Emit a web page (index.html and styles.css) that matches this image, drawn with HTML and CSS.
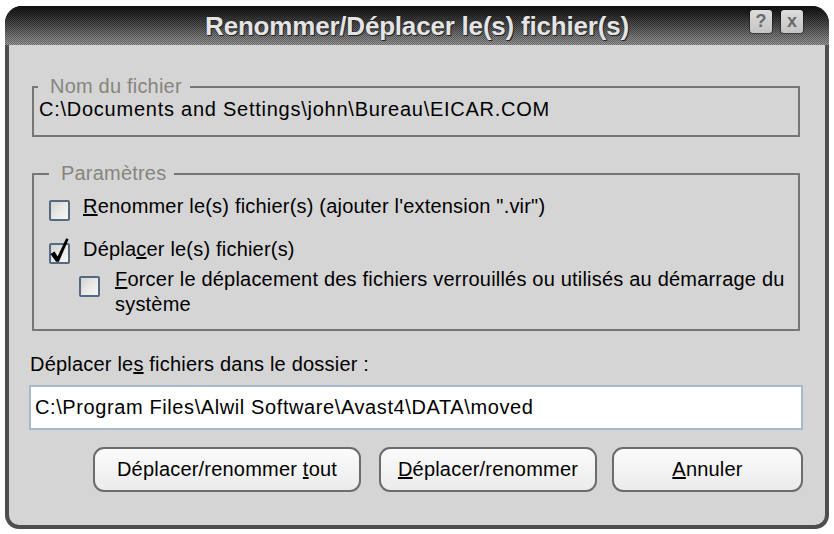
FILE: index.html
```html
<!DOCTYPE html>
<html lang="fr">
<head>
<meta charset="utf-8">
<title>Renommer/Déplacer le(s) fichier(s)</title>
<link rel="stylesheet" href="styles.css">
</head>
<body>
<div class="window">
  <div class="titlebar">
    <span class="tb-spacer"></span>
    <div class="title">Renommer/Déplacer le(s) fichier(s)</div>
    <div class="tb-buttons">
      <span class="tb-btn">?</span>
      <span class="tb-btn">x</span>
    </div>
  </div>
  <div class="content">
    <fieldset class="group group-name">
      <legend>Nom du fichier</legend>
      <div class="path">C:\Documents and Settings\john\Bureau\EICAR.COM</div>
    </fieldset>
    <fieldset class="group group-params">
      <legend>Paramètres</legend>
      <div class="check row1">
        <span class="box"></span>
        <span class="lbl"><u>R</u>enommer le(s) fichier(s) (ajouter l'extension ".vir")</span>
      </div>
      <div class="check row2">
        <span class="box checked"><svg class="tick" viewBox="0 0 21 21" width="21" height="21"><polygon points="1.5,11 5.5,8.6 8.6,13.4 17.2,-4.8 19.6,-3.8 9.9,18.8 7.1,18.8"/></svg></span>
        <span class="lbl">Dépla<u>c</u>er le(s) fichier(s)</span>
      </div>
      <div class="check row3">
        <span class="box"></span>
        <span class="lbl"><u>F</u>orcer le déplacement des fichiers verrouillés ou utilisés au démarrage du système</span>
      </div>
    </fieldset>
    <div class="dest-label">Déplacer le<u>s</u> fichiers dans le dossier :</div>
    <div class="input">C:\Program Files\Alwil Software\Avast4\DATA\moved</div>
    <div class="buttons">
      <div class="btn btn-all">Déplacer/renommer <u>t</u>out</div>
      <div class="btn btn-one"><u>D</u>éplacer/renommer</div>
      <div class="btn btn-cancel"><u>A</u>nnuler</div>
    </div>
  </div>
</div>
</body>
</html>
```

FILE: styles.css
```css
html, body {
  margin: 0;
  padding: 0;
  background: #ffffff;
}

body {
  font-family: "Liberation Sans", Arial, sans-serif;
  font-size: 20px;
  letter-spacing: 0.2px;
  color: #000;
}

.window {
  margin: 6px 0 0 5px;
  width: 824px;
  height: 523px;
  background: #4e4e4e;
  border-radius: 17px 17px 14px 14px;
  display: flex;
  flex-direction: column;
  overflow: hidden;
}

.titlebar {
  height: 39px;
  flex: none;
  display: grid;
  grid-template-columns: 1fr auto 1fr;
  align-items: center;
  background:
    repeating-conic-gradient(rgba(0,0,0,0.28) 0 25%, rgba(255,255,255,0.06) 0 50%) 0 0 / 2px 2px,
    linear-gradient(#0a0a0a 0%, #1e1e1e 20%, #4c4c4c 52%, #808080 85%, #949494 100%);
}

.title {
  font-weight: bold;
  font-size: 26px;
  letter-spacing: -0.2px;
  color: #e4e4e4;
  text-shadow: 0 0 2px #1a1a1a, 1px 1px 0 #2a2a2a;
  line-height: 39px;
  padding-top: 1px;
  white-space: nowrap;
}

.tb-buttons {
  justify-self: end;
  display: flex;
  gap: 9px;
  padding-right: 26px;
  align-self: start;
  padding-top: 4px;
}

.tb-btn {
  width: 22px;
  height: 23px;
  background: linear-gradient(#dcdcdc, #c4c4c4);
  border-radius: 3px;
  box-shadow: 0 0 0 1px rgba(0,0,0,0.35);
  color: #6a6a6a;
  font-weight: bold;
  font-size: 18px;
  line-height: 23px;
  text-align: center;
  letter-spacing: 0;
}

.content {
  flex: 1;
  margin: 0 4px 4px 4px;
  background: #d5d5d5;
  border-radius: 0 0 10px 10px;
  display: flex;
  flex-direction: column;
  padding-top: 30px;
}

.group {
  margin: 0 25px 0 23px;
  padding: 0 4px 0 15px;
  border: 2px solid #767676;
  min-width: 0;
}

.group legend {
  margin-left: 0;
  padding: 0 8px 0 12px;
  line-height: 23px;
  color: #85857d;
}

.group-name {
  padding-left: 4px;
  padding-bottom: 14px;
}

.path {
  line-height: 23px;
  letter-spacing: 0.75px;
  white-space: nowrap;
  padding-left: 1px;
}

.group-params {
  margin-top: 25px;
  padding-top: 9px;
  padding-bottom: 12px;
}

.check {
  display: flex;
  align-items: flex-start;
  gap: 13px;
  line-height: 25px;
}

.row2 {
  margin-top: 16px;
}

.row3 {
  margin-top: 3px;
  margin-left: 30px;
  gap: 15px;
}

.box {
  flex: none;
  width: 17px;
  height: 17px;
  margin-top: 6px;
  border: 2px solid #556a82;
  border-radius: 2px;
  background: linear-gradient(135deg, #d2d2ce 0%, #e8e8e6 50%, #f7f7f7 100%);
  position: relative;
}

.row3 .box {
  margin-top: 9px;
}

.tick {
  position: absolute;
  left: -2px;
  top: -2px;
  overflow: visible;
}

.tick polygon {
  fill: #000;
}

.dest-label {
  margin: 21px 0 0 21px;
  line-height: 25px;
}

.input {
  margin: 8px 22px 0 20px;
  height: 41px;
  border: 2px solid #a7b9cc;
  background: #fff;
  padding-left: 4px;
  line-height: 41px;
  letter-spacing: 0.6px;
  white-space: nowrap;
}

.buttons {
  margin-top: 17px;
  padding-right: 22px;
  display: flex;
  justify-content: flex-end;
  gap: 18px;
}

.btn {
  height: 41px;
  border: 2px solid #6c6c6c;
  border-radius: 11px;
  background: linear-gradient(#fbfbfb, #ebebeb);
  line-height: 41px;
  text-align: center;
  box-sizing: content-box;
}

.btn-all { width: 264px; }
.btn-one { width: 214px; }
.btn-cancel { width: 187px; margin-left: -3px; }
```
